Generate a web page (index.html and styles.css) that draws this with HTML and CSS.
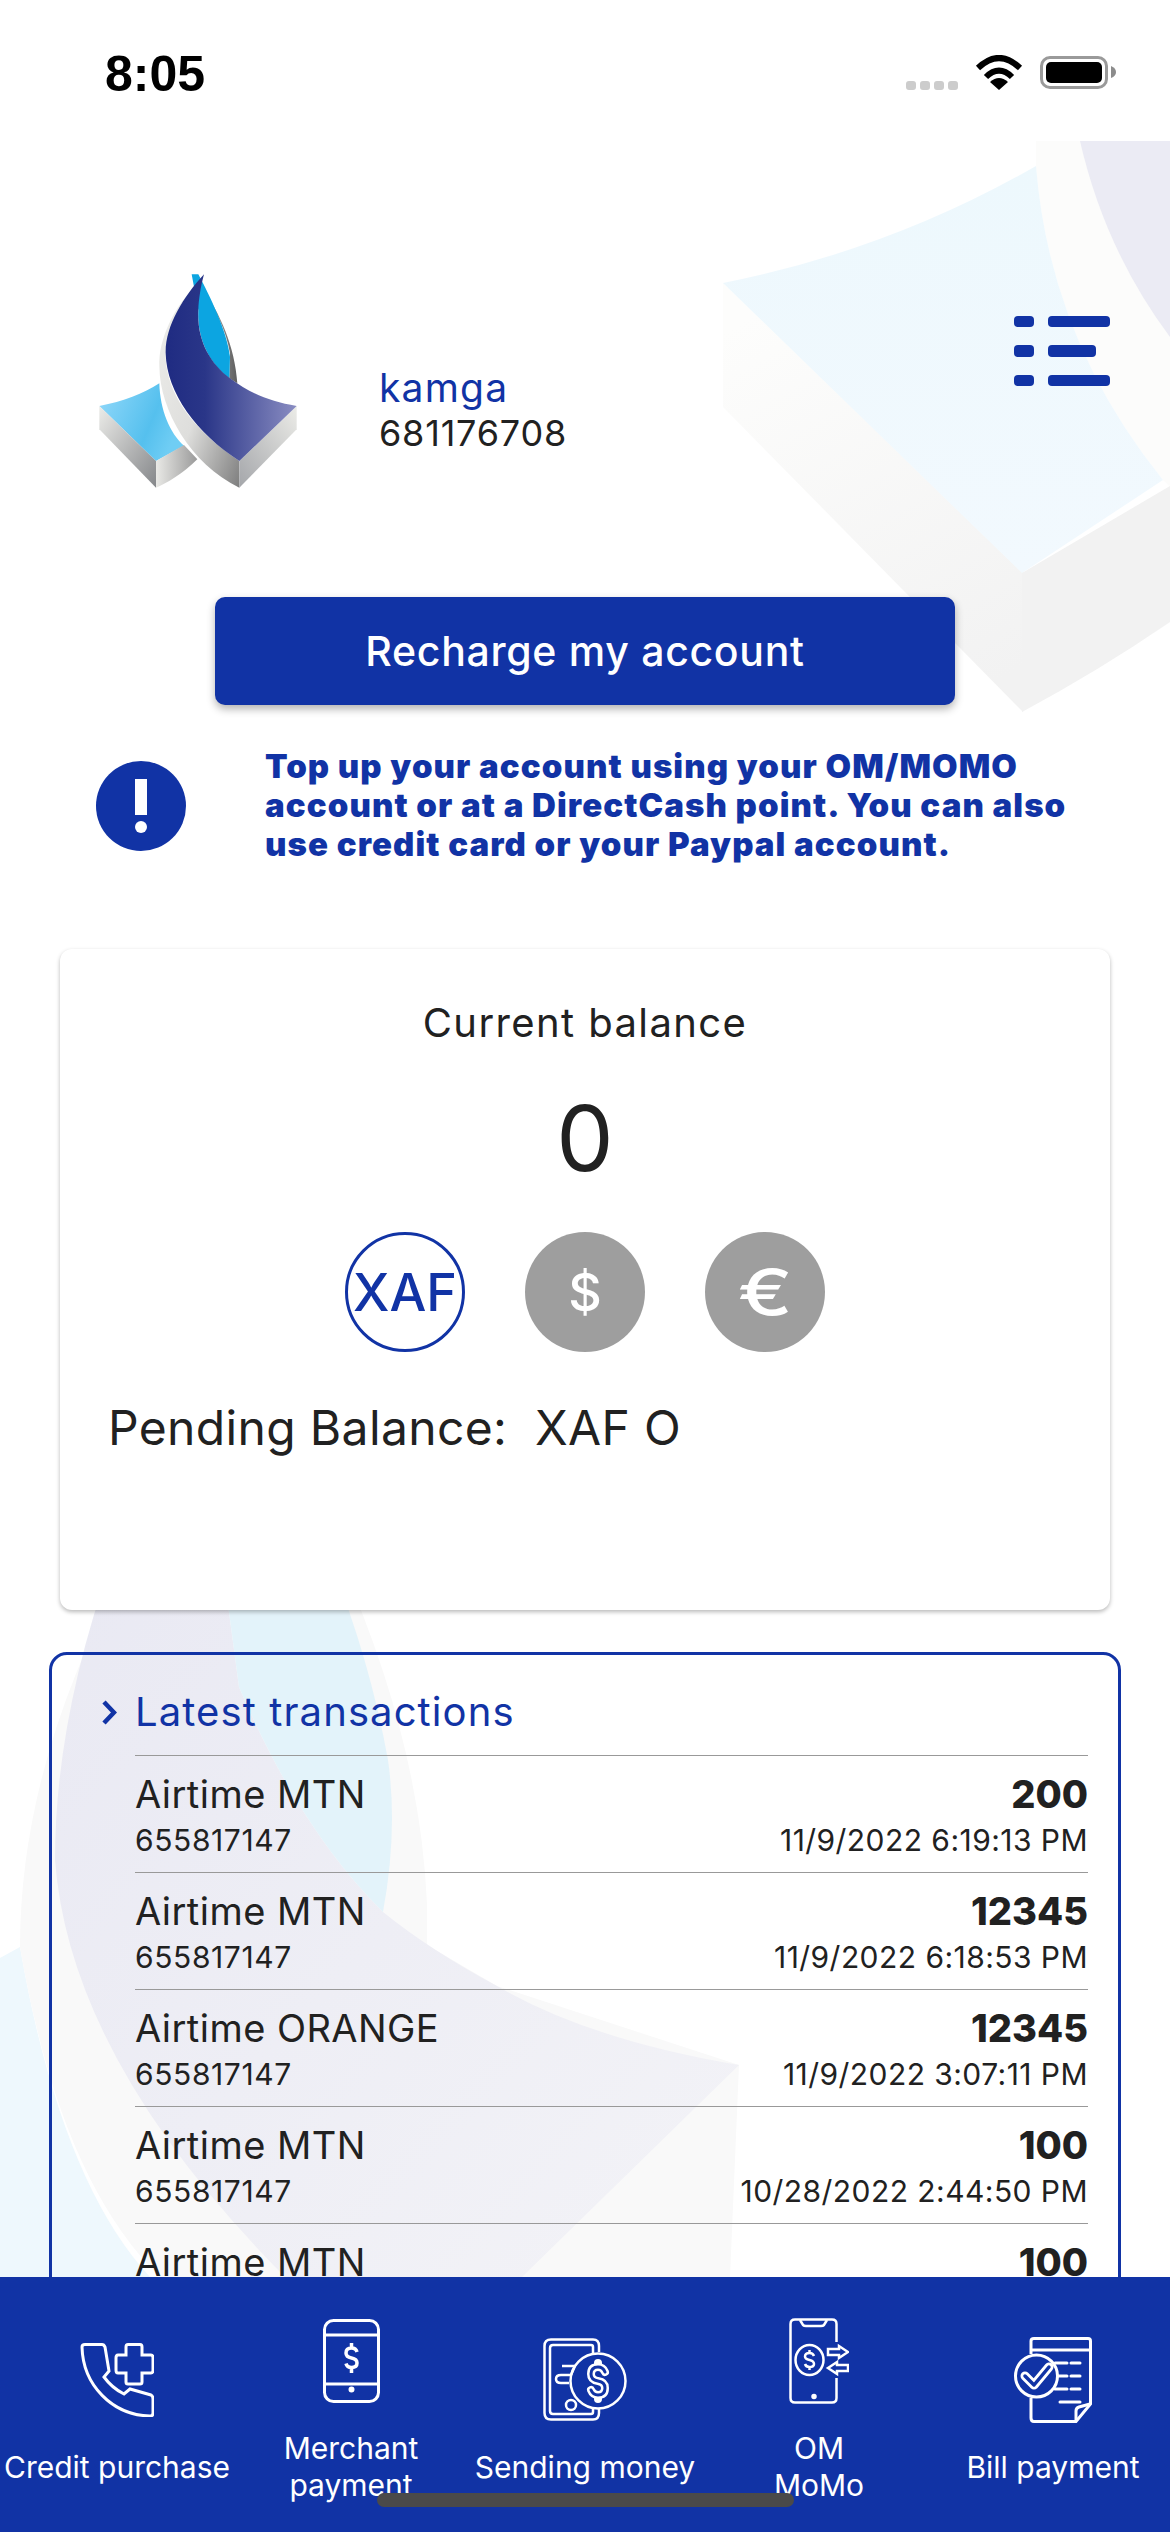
FILE: index.html
```html
<!DOCTYPE html>
<html lang="en">
<head>
<meta charset="utf-8">
<title>Account</title>
<link rel="stylesheet" href="styles.css">
</head>
<body>
<div class="screen">
  <header class="status">
    <span class="clock">8:05</span>
    <div class="status-icons">
      <div class="signal"><i></i><i></i><i></i><i></i></div>
      <svg class="wifi" width="48" height="35" viewBox="0 0 48 35"><path d="M3 13Q24 -7 45 13M11 22Q24 9 37 22" fill="none" stroke="#000" stroke-width="6"/><path d="M24 35L15 27Q24 19 33 27Z" fill="#000"/></svg>
      <div class="battery"><div class="battery-fill"></div></div>
      <svg class="nub" width="5" height="12" viewBox="0 0 5 12"><path d="M0 0Q5 2 5 6Q5 10 0 12Z" fill="#8c8c8c"/></svg>
    </div>
  </header>

  <main class="content">
    <svg class="bg" width="1170" height="2136" viewBox="0 141 1170 2136">
      <defs>
        <linearGradient id="bgFace" gradientUnits="userSpaceOnUse" x1="780" y1="300" x2="1000" y2="680"><stop offset="0" stop-color="#fdfdfc"/><stop offset="1" stop-color="#f2f2f2"/></linearGradient>
        <linearGradient id="bgLav" x1="0" y1="0" x2="1" y2="1"><stop offset="0" stop-color="#e9e9f3"/><stop offset="1" stop-color="#f3f3f7"/></linearGradient>
        <linearGradient id="bgBlue" x1="0" y1="0" x2="0" y2="1"><stop offset="0" stop-color="#edf8fd"/><stop offset="1" stop-color="#f2f9fe"/></linearGradient>
      </defs>
      <path d="M723 283V407L1023 712V573Z" fill="url(#bgFace)"/>
      <path d="M1036 141V166Q1050 340 1163 480L1170 486V141Z" fill="#fcfcfb"/>
      <path d="M1080 141Q1105 250 1170 337V141Z" fill="#ebebf4"/>
      <path d="M723 283Q890 250 1036 166Q1050 340 1163 480L1022 573Z" fill="url(#bgBlue)"/>
      <path d="M1022 573L1170 486V622Q1100 670 1022 712Z" fill="#f2f2f2"/>

      <path d="M0 1958L20 1947Q60 2180 150 2277H0Z" fill="#eef8fd"/>
      <path d="M130 1560Q20 1760 20 1947Q60 2180 160 2277H730L739 2065L497 1986L427 1945V1904Q420 1740 340 1560Z" fill="#f9f9f9"/>
      <path d="M112 1560Q55 1720 55 1860Q70 2060 285 2277H522L739 2065Q590 2040 497 1986Q430 1950 383 1912Q300 1830 239 1687L222 1560Z" fill="url(#bgLav)"/>
      <path d="M222 1560L239 1687Q300 1830 383 1912Q398 1830 388 1760Q370 1660 330 1560Z" fill="#e3f3fa"/>
    </svg>

    <section class="profile">
      <svg class="logo" width="260" height="250" viewBox="0 0 780 750">
        <defs>
          <linearGradient id="gSail" x1="0" y1="0" x2="1" y2="0"><stop offset="0" stop-color="#1f2b82"/><stop offset="0.3" stop-color="#2a3688"/><stop offset="1" stop-color="#8a8dc2"/></linearGradient>
          <linearGradient id="gWing" x1="0" y1="0" x2="1" y2="0.4"><stop offset="0" stop-color="#93d9fa"/><stop offset="0.7" stop-color="#55c0ee"/><stop offset="1" stop-color="#6fcdf4"/></linearGradient>
          <linearGradient id="gBackEdge" x1="0" y1="0" x2="1" y2="0"><stop offset="0" stop-color="#b9b9b9"/><stop offset="1" stop-color="#5e5e5e"/></linearGradient>
          <linearGradient id="gLeft" x1="0" y1="0" x2="1" y2="1"><stop offset="0" stop-color="#ecece9"/><stop offset="1" stop-color="#85878a"/></linearGradient>
          <linearGradient id="gFrontR" x1="0" y1="0" x2="1" y2="0"><stop offset="0" stop-color="#e9e9e6"/><stop offset="1" stop-color="#9a9a9a"/></linearGradient>
          <linearGradient id="gBand" x1="0" y1="0" x2="1" y2="1"><stop offset="0" stop-color="#efefec"/><stop offset="0.55" stop-color="#dededc"/><stop offset="1" stop-color="#7e7e7e"/></linearGradient>
          <linearGradient id="gRight" x1="0" y1="1" x2="1" y2="0"><stop offset="0" stop-color="#a4a6aa"/><stop offset="1" stop-color="#ecece8"/></linearGradient>
        </defs>
        <path d="M455 110C510 190 555 290 562 400L538 385L540 310C530 240 490 170 455 110Z" fill="url(#gBackEdge)"/>
        <path d="M425 73L445 73C480 140 530 240 540 320L538 385C490 350 440 280 445 180Z" fill="#0ca5e1"/>
        <path d="M148 468C220 455 280 430 328 400C330 480 360 550 402 587L318 633Z" fill="url(#gWing)"/>
        <path d="M148 468L318 633V713L148 538Z" fill="url(#gLeft)"/>
        <path d="M318 633L402 585L442 628C400 670 350 700 318 713Z" fill="url(#gFrontR)"/>
        <path d="M445 100C370 170 325 270 328 350C330 480 420 640 568 713V633C430 540 345 430 347 310Z" fill="url(#gBand)"/>
        <path d="M568 633L740 468V538L568 713Z" fill="url(#gRight)"/>
        <path d="M462 73C400 140 345 230 347 310C350 430 440 550 568 633L740 468C660 455 600 430 540 385C480 340 440 270 445 180C446 150 452 110 462 73Z" fill="url(#gSail)"/>
      </svg>
      <div class="identity">
        <div class="name">kamga</div>
        <div class="msisdn">681176708</div>
      </div>
      <svg class="menu" width="96" height="70" viewBox="0 0 96 70" fill="#1133a5">
        <rect x="0" y="0" width="20" height="11" rx="4"/><rect x="34" y="0" width="62" height="11" rx="4"/>
        <rect x="0" y="29" width="20" height="12" rx="4"/><rect x="34" y="29" width="48" height="12" rx="4"/>
        <rect x="0" y="59" width="20" height="11" rx="4"/><rect x="34" y="59" width="62" height="11" rx="4"/>
      </svg>
    </section>

    <button class="recharge">Recharge my account</button>

    <section class="notice">
      <svg class="notice-icon" width="90" height="90" viewBox="0 0 90 90"><circle cx="45" cy="45" r="45" fill="#1133a5"/><rect x="39" y="18" width="12" height="36" fill="#fff"/><circle cx="45" cy="66" r="6" fill="#fff"/></svg>
      <p class="notice-text">Top up your account using your OM/MOMO<br>account or at a DirectCash point. You can also<br>use credit card or your Paypal account.</p>
    </section>

    <section class="balance">
      <div class="balance-title">Current balance</div>
      <div class="balance-value">0</div>
      <div class="coins">
        <div class="coin coin-active">XAF</div>
        <div class="coin coin-dollar">$</div>
        <div class="coin coin-euro"><span class="euro-glyph">€</span></div>
      </div>
      <div class="pending">Pending Balance:&nbsp; XAF O</div>
    </section>

    <section class="tx">
      <div class="tx-head">
        <svg class="chevron" width="16" height="27" viewBox="0 0 16 27"><path d="M3 3L13 13.5L3 24" fill="none" stroke="#1133a5" stroke-width="4.5"/></svg>
        <span>Latest transactions</span>
      </div>
      <div class="tx-row"><div class="tx-name">Airtime MTN</div><div class="tx-amount">200</div><div class="tx-num">655817147</div><div class="tx-date">11/9/2022 6:19:13 PM</div></div>
      <div class="tx-row"><div class="tx-name">Airtime MTN</div><div class="tx-amount">12345</div><div class="tx-num">655817147</div><div class="tx-date">11/9/2022 6:18:53 PM</div></div>
      <div class="tx-row"><div class="tx-name">Airtime ORANGE</div><div class="tx-amount">12345</div><div class="tx-num">655817147</div><div class="tx-date">11/9/2022 3:07:11 PM</div></div>
      <div class="tx-row"><div class="tx-name">Airtime MTN</div><div class="tx-amount">100</div><div class="tx-num">655817147</div><div class="tx-date">10/28/2022 2:44:50 PM</div></div>
      <div class="tx-row"><div class="tx-name">Airtime MTN</div><div class="tx-amount">100</div></div>
    </section>
  </main>

  <nav class="nav">
    <div class="nav-item">
      <div class="nav-icon"><svg width="74" height="74" viewBox="0 0 74 74" fill="none" stroke="#fff" stroke-width="3"><path d="M2 4Q2 1.500 5 1.500H22Q24 1.500 25 4L29 28L24 34Q32 45 44 51L50 46L71 52Q73 53 73 56V70Q73 73 70 73C32 72 3 42 2 4Z"/><path d="M48 1.500H60Q62 1.500 62 4V12H71Q73 12 73 15V27Q73 30 71 30H62V39Q62 41 60 41H48Q46 41 46 39V30H38Q36 30 36 27V15Q36 12 38 12H46V4Q46 1.500 48 1.500Z"/></svg></div>
      <span class="nav-label">Credit purchase</span>
    </div>
    <div class="nav-item">
      <div class="nav-icon"><svg width="57" height="84" viewBox="0 0 57 84" fill="none" stroke="#fff" stroke-width="3"><rect x="1.500" y="1.500" width="54" height="81" rx="9"/><path d="M2 16H55M2 65H55"/><circle cx="28.500" cy="70.500" r="1.500" fill="#fff"/><path d="M34 33Q33 29 28.500 29Q23 29 23 34Q23 38 28.500 39Q34 40 34 44Q34 48.500 28.500 48.500Q24 48.500 23 44.500M28.500 24V29M28.500 48.500V54" stroke-width="3.500"/></svg></div>
      <span class="nav-label">Merchant<br>payment</span>
    </div>
    <div class="nav-item">
      <div class="nav-icon"><svg width="84" height="83" viewBox="0 0 84 83" fill="none" stroke="#fff" stroke-width="2.500"><path d="M56 14V8Q56 1.500 50 1.500H8Q1.500 1.500 1.500 8V75Q1.500 81.500 8 81.500H50Q56 81.500 56 75V71"/><path d="M50 15V9Q50 7 48 7H10Q7 7 7 10V73Q7 76 10 76H48Q50 76 50 74V71"/><circle cx="55" cy="43" r="27.500"/><path d="M19 28H32L28 37H18Q13 37 13 41Q13 45 18 45H26"/><circle cx="28" cy="67" r="5"/><g stroke-linecap="round"><path d="M62 34Q60 29 55 29Q48 29 48 36Q48 42 55 43Q62 44 62 50Q62 57 55 57Q50 57 48 52M55 25V29M55 57V61" stroke-width="8"/><path d="M62 34Q60 29 55 29Q48 29 48 36Q48 42 55 43Q62 44 62 50Q62 57 55 57Q50 57 48 52" stroke="#1133a5" stroke-width="3"/></g></svg></div>
      <span class="nav-label">Sending money</span>
    </div>
    <div class="nav-item">
      <div class="nav-icon"><svg width="60" height="86" viewBox="0 0 60 86" fill="none" stroke="#fff" stroke-width="2.500"><path d="M47.500 24V6Q47.500 1.500 43 1.500H6Q1.500 1.500 1.500 6V80Q1.500 84.500 6 84.500H43Q47.500 84.500 47.500 80V60"/><path d="M11 2L14 7Q15 8 17 8H32Q34 8 35 7L38 2"/><ellipse cx="20.500" cy="42" rx="14" ry="15"/><path d="M25 38Q24 35 20.500 35Q16 35 16 38.500Q16 41 20.500 42Q25 43 25 46Q25 49 20.500 49Q17 49 16 46M20.500 32V35M20.500 49V52" stroke-width="2.500"/><path d="M39 31H50V28L59 34L50 40V37H39Z"/><path d="M59 47H48V44L39 50L48 56V53H59Z"/><circle cx="25" cy="78.500" r="1.500" fill="#fff"/></svg></div>
      <span class="nav-label">OM<br>MoMo</span>
    </div>
    <div class="nav-item">
      <div class="nav-icon"><svg width="78" height="86" viewBox="0 0 78 86" fill="none" stroke="#fff" stroke-width="3"><path d="M17 17V4Q17 1.500 20 1.500H74Q76.500 1.500 76.500 4V67L62 84.500H20Q17 84.500 17 81V61"/><path d="M17 13H76"/><path d="M76 67L65 70Q62 71 62 74V84"/><circle cx="22.500" cy="39" r="21"/><path d="M41 26H53M57 26H66M44 39H53M57 39H66M41 52H53M57 52H66M46 65H66" stroke-linecap="round"/><path d="M11 39L20 48L35 30" stroke-width="9" stroke-linecap="round" stroke-linejoin="round"/><path d="M11 39L20 48L35 30" stroke="#1133a5" stroke-width="3.500" stroke-linecap="round" stroke-linejoin="round"/></svg></div>
      <span class="nav-label">Bill payment</span>
    </div>
    <div class="home-indicator"></div>
  </nav>
</div>
</body>
</html>
```

FILE: styles.css
```css
* { box-sizing: border-box; }
html, body { margin: 0; padding: 0; background: #fff; }
body { font-family: Inter, "Noto Sans", sans-serif; color: #212121; }
.screen { position: relative; width: 1170px; height: 2532px; display: flex; flex-direction: column; overflow: hidden; background: #fff; }

.status { flex: 0 0 141px; display: flex; justify-content: space-between; align-items: flex-start; padding: 45px 54px 0 105px; }
.clock { font-family: "Liberation Sans", Arial, sans-serif; font-weight: 700; font-size: 50px; line-height: 58px; color: #000; }
.status-icons { display: flex; align-items: flex-end; height: 45px; padding-top: 10px; }
.signal { display: flex; gap: 4px; margin-right: 17px; }
.signal i { display: block; width: 10px; height: 9px; border-radius: 3px; background: #ccc; }
.wifi { display: block; margin-right: 17px; }
.battery { width: 68px; height: 33px; padding: 3px; border: 3px solid #9a9a9a; border-radius: 10px; margin-bottom: 1px; }
.battery-fill { width: 100%; height: 100%; background: #000; border-radius: 5px; }
.nub { display: block; margin: 0 0 12px 3px; }

.content { position: relative; flex: 1 1 auto; min-height: 0; overflow: hidden; padding-top: 109px; }
.bg { position: absolute; left: 0; top: 0; display: block; }
.profile, .recharge, .notice, .balance, .tx { position: relative; }

.profile { display: flex; align-items: flex-start; height: 250px; padding-left: 50px; padding-right: 60px; }
.logo { display: block; flex: none; }
.identity { margin-left: 69px; padding-top: 114px; }
.name { font-size: 39px; line-height: 48px; letter-spacing: 1.2px; color: #1133a5; }
.msisdn { font-size: 36px; line-height: 43px; letter-spacing: .8px; color: #212121; }
.menu { display: block; margin-left: auto; margin-top: 66px; }

.recharge { display: block; width: 740px; height: 108px; margin: 97px 0 0 215px; border: 0; border-radius: 10px; background: #1133a5; color: #fff; font-family: inherit; font-weight: 500; font-size: 41px; letter-spacing: .7px; box-shadow: 0 4px 8px rgba(0,0,0,.3); }

.notice { display: flex; align-items: center; gap: 79px; margin-top: 42px; padding-left: 96px; }
.notice-icon { display: block; flex: none; }
.notice-text { margin: 0; font-weight: 900; font-size: 33px; line-height: 39px; letter-spacing: 1.07px; color: #1133a5; white-space: nowrap; }

.balance { width: 1050px; height: 661px; margin: 85px 0 0 60px; padding: 50px 48px 0; background: #fff; border-radius: 12px; box-shadow: 0 2px 4px rgba(0,0,0,.28); }
.balance-title { text-align: center; font-size: 40px; line-height: 48px; letter-spacing: 1.4px; font-weight: 400; color: #212121; }
.balance-value { text-align: center; font-size: 91px; line-height: 110px; margin-top: 36px; color: #212121; }
.coins { display: flex; justify-content: center; gap: 60px; margin-top: 39px; }
.coin { display: flex; align-items: center; justify-content: center; width: 120px; height: 120px; border-radius: 50%; background: #9e9e9e; color: #fff; }
.coin-dollar { font-size: 52px; font-weight: 500; }
.coin-euro { font-size: 63px; font-weight: 500; }
.euro-glyph { display: block; transform: scaleX(1.3); }
.coin-active { background: #fff; border: 3px solid #1133a5; color: #1133a5; font-size: 52px; font-weight: 500; }
.pending { font-size: 48px; line-height: 58px; margin-top: 47px; color: #212121; letter-spacing: .35px; white-space: nowrap; }

.tx { width: 1072px; height: 800px; margin: 42px 0 0 49px; padding: 28px 30px 0 83px; border: 3px solid #1133a5; border-radius: 18px; }
.tx-head { display: flex; align-items: center; gap: 18px; margin-left: -34px; height: 58px; margin-bottom: 14px; color: #1133a5; font-size: 40px; line-height: 58px; letter-spacing: 1.1px; }
.chevron { display: block; flex: none; }
.tx-row { display: grid; grid-template-columns: 1fr auto; align-content: start; height: 117px; padding-top: 15px; border-top: 1px solid #999; }
.tx-name { font-size: 38px; line-height: 46px; letter-spacing: .45px; color: #212121; }
.tx-amount { text-align: right; font-size: 38px; line-height: 46px; font-weight: 800; color: #212121; }
.tx-num { font-size: 30px; line-height: 46px; color: #212121; letter-spacing: .6px; }
.tx-date { text-align: right; font-size: 30px; line-height: 46px; color: #212121; letter-spacing: .45px; }

.nav { position: relative; flex: 0 0 255px; display: grid; grid-template-columns: repeat(5, 234px); padding-top: 11px; background: #1133a5; color: #fff; }
.nav-item { display: flex; flex-direction: column; align-items: center; justify-content: center; gap: 24px; text-align: center; }
.nav-icon { display: flex; align-items: center; justify-content: center; height: 90px; }
.nav-label { font-size: 30px; line-height: 37px; white-space: nowrap; }
.home-indicator { position: absolute; left: 377px; top: 216px; width: 417px; height: 14px; border-radius: 7px; background: #4a4a4a; }
```
